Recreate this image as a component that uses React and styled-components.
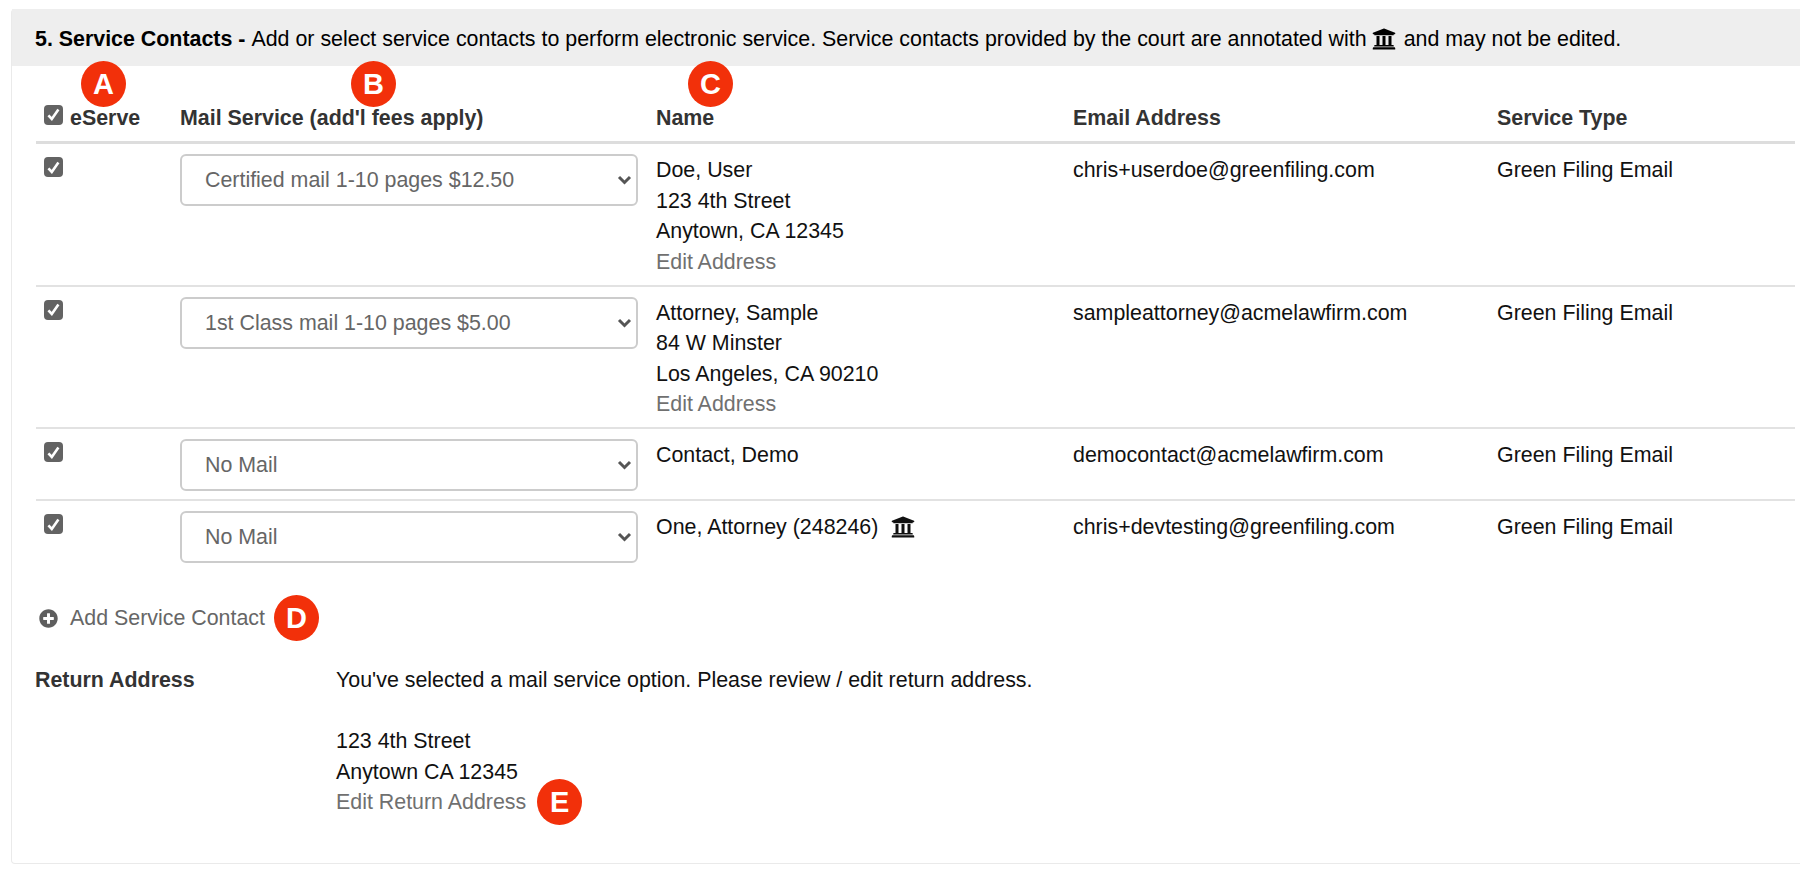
import React from "react";
import styled, { createGlobalStyle } from "styled-components";
import { FaUniversity, FaPlusCircle } from "react-icons/fa";

const GlobalStyle = createGlobalStyle`
  html, body {
    margin: 0;
    background: #fff;
    font-family: "Liberation Sans", Arial, sans-serif;
    font-size: 21.4px;
    line-height: 30.5px;
    color: #111;
  }
`;

const Page = styled.div`
  padding: 9px 0 0 11px;
  overflow: hidden;
  height: 870px;
  box-sizing: border-box;
`;

const Panel = styled.section`
  height: 855px;
  width: 1800px;
  box-sizing: border-box;
  border: 1px solid #eaeaea;
  border-top: 0;
  border-radius: 4px;
`;

const PanelHeading = styled.h2`
  margin: 0;
  height: 57px;
  box-sizing: border-box;
  padding: 3px 0 0 23px;
  display: flex;
  align-items: center;
  gap: 0.28em;
  background: #eeeeee;
  font-size: inherit;
  font-weight: normal;
  color: #000;
  white-space: pre;
`;

const HeadingIcon = styled(FaUniversity)`
  margin: 0 2px 0 -1px;
`;

const Table = styled.div`
  width: 1759px;
  margin-left: 24px;
`;

const Columns = styled.div`
  display: grid;
  grid-template-columns: 136px 476px 417px 424px 1fr;
  padding-left: 8px;
`;

const HeadRow = styled(Columns)`
  align-items: end;
  height: 67px;
  padding-bottom: 8px;
  border-bottom: 3px solid #dddddd;
`;

const HeadCell = styled.div`
  position: relative;
  display: flex;
  align-items: center;
  font-weight: bold;
  color: #333;
`;

const Row = styled(Columns)`
  padding-top: 11px;
  padding-bottom: 7.5px;
  border-bottom: ${(p) => (p.$last ? "0" : "2px solid #e2e2e2")};
`;

const CheckCell = styled.div`
  display: flex;
  align-items: flex-start;
  padding-top: 2px;
`;

const Box = styled.span`
  width: 19px;
  height: 20px;
  border-radius: 4px;
  background: #636363;
  display: inline-flex;
  align-items: center;
  justify-content: center;
  flex: none;
  margin-top: ${(p) => (p.$head ? "-6px" : "0")};
  margin-right: ${(p) => (p.$head ? "7px" : "0")};
`;

const SelectWrap = styled.div`
  position: relative;
  width: 458px;
  height: 52px;
  margin: -1px 0 0.5px;
`;

const Dropdown = styled.select`
  appearance: none;
  width: 100%;
  height: 100%;
  box-sizing: border-box;
  padding: 0 0 0 23px;
  border: 2px solid #cccccc;
  border-radius: 6px;
  background-color: #fff;
  font-family: inherit;
  font-size: inherit;
  color: #666;
`;

const Chevron = styled.svg`
  position: absolute;
  right: 6px;
  top: 21px;
  pointer-events: none;
`;

const Lines = styled.div`
  display: flex;
  flex-direction: column;
`;

const NameLine = styled.span`
  display: flex;
  align-items: center;
  gap: 13px;
`;

const GreyLink = styled.a`
  color: #707070;
`;

const Badge = styled.span`
  width: 45px;
  height: 46px;
  border-radius: 50%;
  background: #f2300a;
  color: #fff;
  font-weight: bold;
  font-size: 29px;
  line-height: 46px;
  text-align: center;
  flex: none;
`;

const HeadBadge = styled(Badge)`
  position: absolute;
  top: -42px;
  left: ${(p) => p.$left}px;
`;

const AddContact = styled.div`
  display: flex;
  align-items: center;
  height: 46px;
  margin: 24px 0 0 27px;
  color: #666;
`;

const AddIcon = styled(FaPlusCircle)`
  width: 19px;
  height: 19px;
  margin-right: 12px;
  color: #5e5e5e;
`;

const AddBadge = styled(Badge)`
  margin-left: 9px;
`;

const ReturnBlock = styled.div`
  display: grid;
  grid-template-columns: 301px 1fr;
  margin: 24px 0 0 23px;
`;

const ReturnLabel = styled.div`
  font-weight: bold;
  color: #333;
`;

const Spacer = styled.div`
  height: 30.5px;
`;

const EditLine = styled.div`
  display: flex;
  align-items: center;
  gap: 11px;
  height: 30.5px;
`;

const contacts = [
  {
    mail: "Certified mail 1-10 pages $12.50",
    lines: ["Doe, User", "123 4th Street", "Anytown, CA 12345"],
    edit: true,
    email: "chris+userdoe@greenfiling.com",
  },
  {
    mail: "1st Class mail 1-10 pages $5.00",
    lines: ["Attorney, Sample", "84 W Minster", "Los Angeles, CA 90210"],
    edit: true,
    email: "sampleattorney@acmelawfirm.com",
  },
  {
    mail: "No Mail",
    lines: ["Contact, Demo"],
    email: "democontact@acmelawfirm.com",
  },
  {
    mail: "No Mail",
    lines: ["One, Attorney (248246)"],
    court: true,
    email: "chris+devtesting@greenfiling.com",
  },
];

const Check = ({ head }) => (
  <Box $head={head}>
    <svg width="13" height="13" viewBox="0 0 13 13">
      <path d="M1.4 7.4 4.8 11 11.4 1.6" fill="none" stroke="#fff" strokeWidth="2.6" />
    </svg>
  </Box>
);

export default function App() {
  return (
    <Page>
      <GlobalStyle />
      <Panel>
        <PanelHeading>
          <b>5. Service Contacts -</b>
          <span>Add or select service contacts to perform electronic service. Service contacts provided by the court are annotated with</span>
          <HeadingIcon size={24} />
          <span>and may not be edited.</span>
        </PanelHeading>
        <Table>
          <HeadRow>
            <HeadCell>
              <Check head />
              eServe
              <HeadBadge $left={37}>A</HeadBadge>
            </HeadCell>
            <HeadCell>
              Mail Service (add'l fees apply)
              <HeadBadge $left={171}>B</HeadBadge>
            </HeadCell>
            <HeadCell>
              Name
              <HeadBadge $left={32}>C</HeadBadge>
            </HeadCell>
            <HeadCell>Email Address</HeadCell>
            <HeadCell>Service Type</HeadCell>
          </HeadRow>
          {contacts.map((c, i) => (
            <Row key={i} $last={i === contacts.length - 1}>
              <CheckCell><Check /></CheckCell>
              <SelectWrap>
                <Dropdown defaultValue={c.mail}>
                  <option>{c.mail}</option>
                </Dropdown>
                <Chevron width="15" height="10" viewBox="0 0 15 10">
                  <path d="M2 2 7.5 7.5 13 2" fill="none" stroke="#555" strokeWidth="3" />
                </Chevron>
              </SelectWrap>
              <Lines>
                {c.lines.map((l) => (
                  <NameLine key={l}>
                    {l}
                    {c.court && <FaUniversity size={24} />}
                  </NameLine>
                ))}
                {c.edit && <GreyLink>Edit Address</GreyLink>}
              </Lines>
              <div>{c.email}</div>
              <div>Green Filing Email</div>
            </Row>
          ))}
        </Table>
        <AddContact>
          <AddIcon />
          Add Service Contact
          <AddBadge>D</AddBadge>
        </AddContact>
        <ReturnBlock>
          <ReturnLabel>Return Address</ReturnLabel>
          <Lines>
            <div>You've selected a mail service option. Please review / edit return address.</div>
            <Spacer />
            <div>123 4th Street</div>
            <div>Anytown CA 12345</div>
            <EditLine>
              <GreyLink>Edit Return Address</GreyLink>
              <Badge>E</Badge>
            </EditLine>
          </Lines>
        </ReturnBlock>
      </Panel>
    </Page>
  );
}
